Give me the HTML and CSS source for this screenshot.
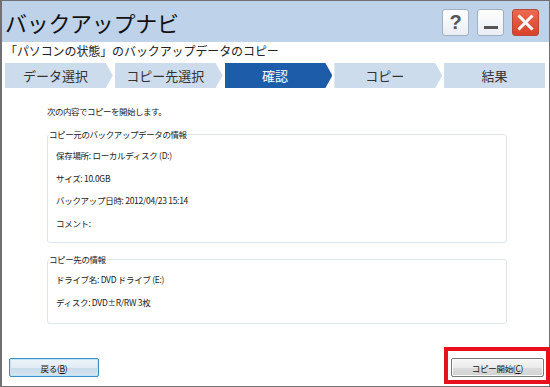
FILE: index.html
```html
<!DOCTYPE html>
<html>
<head>
	<meta charset="utf-8">
	<title>バックアップナビ</title>
	<link rel="stylesheet" href="styles.css">
</head>
<body>
	<div class="window">
		<!-- タイトルバー -->
		<header class="titlebar">
			<h1 class="title">バックアップナビ</h1>
			<div class="tbtns">
				<span class="tbtn help">?</span>
				<span class="tbtn min"><i></i></span>
				<span class="tbtn close">
					<svg width="17" height="17" viewBox="0 0 17 17"><path d="M2.5 2.5L14.5 14.5M14.5 2.5L2.5 14.5" stroke="#fff" stroke-width="3" stroke-linecap="square"/></svg>
				</span>
			</div>
		</header>
		<p class="subtitle">「パソコンの状態」のバックアップデータのコピー</p>
		<!-- ステップ -->
		<ol class="steps">
			<li class="step">データ選択</li>
			<li class="step">コピー先選択</li>
			<li class="step active">確認</li>
			<li class="step">コピー</li>
			<li class="step last">結果</li>
		</ol>
		<!-- 内容 -->
		<section class="content">
			<p class="lead">次の内容でコピーを開始します。</p>
			<fieldset class="group src">
				<legend>コピー元のバックアップデータの情報</legend>
				<div class="row">保存場所: ローカルディスク (D:)</div>
				<div class="row">サイズ: 10.0GB</div>
				<div class="row">バックアップ日時: 2012/04/23 15:14</div>
				<div class="row">コメント:</div>
			</fieldset>
			<fieldset class="group dst">
				<legend>コピー先の情報</legend>
				<div class="row">ドライブ名: DVD ドライブ (E:)</div>
				<div class="row">ディスク: DVD±R/RW 3枚</div>
			</fieldset>
		</section>
		<footer class="footer">
			<button class="btn back">戻る(<u>B</u>)</button>
			<button class="btn start">コピー開始(<u>C</u>)</button>
		</footer>
	</div>
	<div class="mark"></div>
</body>
</html>
```

FILE: styles.css
```css
*{margin: 0;padding: 0;box-sizing: border-box;}
body{width: 550px;height: 387px;position: relative;background: #fff;font-family: "Noto Sans CJK JP", sans-serif;color: #222;}
.window{width: 550px;height: 387px;border: 1px solid #707070;border-left-width: 2px;display: flex;flex-direction: column;}

.titlebar{height: 41px;background: #bed3e9;display: flex;align-items: center;justify-content: space-between;padding-left: 3px;}
.title{font-size: 22px;font-weight: normal;color: #111;line-height: 40px;letter-spacing: -0.3px;}
.tbtns{display: flex;gap: 8px;padding-right: 10px;margin-top: 1px;}
.tbtn{width: 27px;height: 27px;border-radius: 3px;border: 1px solid #9fb0c2;background: linear-gradient(#ffffff, #e9eef3);display: flex;align-items: center;justify-content: center;}
.tbtn.help{font-family: "Liberation Sans", sans-serif;font-weight: bold;font-size: 20px;color: #555;line-height: 27px;}
.tbtn.min{align-items: flex-end;padding-bottom: 6px;}
.tbtn.min i{display: block;width: 14px;height: 3px;background: #555;}
.tbtn.close{background: linear-gradient(#ec6a50, #d8402a);border-color: #b5483a;}

.subtitle{font-size: 12px;line-height: 18px;padding-left: 3px;color: #222;letter-spacing: -0.1px;}

.steps{list-style: none;display: flex;gap: 2px;margin-top: 3px;padding: 0 4px 0 3px;height: 25px;}
.step{flex: 1;background: #cddced;color: #333;font-size: 13px;line-height: 25px;text-align: center;padding-right: 7px;clip-path: polygon(0 0, calc(100% - 7px) 0, 100% 50%, calc(100% - 7px) 100%, 0 100%);}
.step.active{background: #1d5ca8;color: #fff;}
.step.last{clip-path: none;padding-right: 0;}

.content{padding-left: 45px;padding-right: 42px;}
.lead{font-size: 8.5px;line-height: 12px;margin-top: 17px;letter-spacing: -0.5px;}
.group{border: 1px solid #dde4ec;border-radius: 3px;margin-top: 11px;padding: 4px 0 8px 8px;}
.group legend{font-size: 8.5px;line-height: 12px;padding: 0 1px 0 0;margin-left: -7px;letter-spacing: -0.4px;}
.group.dst{margin-top: 10px;padding-top: 3px;padding-bottom: 10px;}
.row{font-size: 8.5px;line-height: 22.5px;letter-spacing: -0.3px;}

.footer{margin-top: auto;display: flex;justify-content: space-between;padding: 0 5px 9px 7px;}
.btn{height: 19px;font-family: "Noto Sans CJK JP", sans-serif;font-size: 8.5px;color: #111;border-radius: 2px;letter-spacing: -0.3px;}
.btn u{text-decoration: underline;}
.btn.back{width: 90px;border: 1px solid #3d8fc4;background: linear-gradient(#eef5fb 0%, #e1ecf5 50%, #cadbe9 51%, #d6e5f0 100%);box-shadow: inset 0 0 0 1px #bfe3f7;}
.btn.start{width: 93px;border: 1px solid #777;background: linear-gradient(#f6f6f6 0%, #ebebeb 50%, #dcdcdc 51%, #d2d2d2 100%);box-shadow: inset 0 0 0 1px #fcfcfc;}

.mark{position: absolute;left: 444px;top: 347px;width: 106px;height: 37px;border: 4px solid #e8101c;}
```
